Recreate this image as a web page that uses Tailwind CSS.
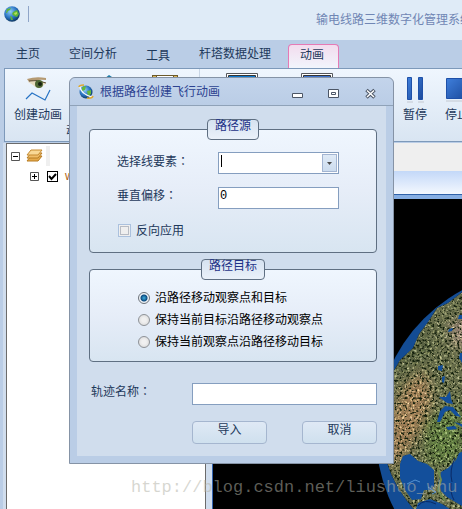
<!DOCTYPE html>
<html lang="zh-CN">
    <head>
        <meta charset="UTF-8">
        <meta name="viewport" content="width=device-width, initial-scale=1.0">
        <title>输电线路三维数字化管理系统</title>
        <script src="https://cdn.jsdelivr.net/npm/@tailwindcss/browser@4"></script>
    </head>
    <body class="relative flex h-screen flex-col overflow-hidden bg-[#bacde6] font-['Liberation_Sans','Noto_Sans_CJK_SC',sans-serif] text-xs text-[#1e395b]">
        <!-- title bar -->
        <header class="flex h-10 shrink-0 items-start overflow-hidden bg-[#dfebf7] pl-1 pt-1.5">
            <svg class="size-4 shrink-0" viewBox="0 0 16 16">
                <defs>
                    <radialGradient id="ball" cx="40%" cy="35%" r="65%">
                        <stop offset="0" stop-color="#8fcdf4"/>
                        <stop offset="0.6" stop-color="#2a74c4"/>
                        <stop offset="1" stop-color="#0f3a64"/>
                    </radialGradient>
                </defs>
                <circle cx="8" cy="8" r="7.8" fill="url(#ball)"/>
                <path d="M3 3L7 2L6 4L4 5L3 7L2 7ZM9 6L13 4L15 8L13 11L10 10L8 8ZM6 10L8 11L9 14L7 14Z" fill="#5db53a"/>
                <path d="M10 7L13 6L13 8L11 9Z" fill="#b6e05a"/>
            </svg>
            <span class="ml-2 h-4 w-px shrink-0 bg-[#8fa5c8]"></span>
            <h1 class="ml-[287px] mt-1 whitespace-nowrap leading-5 text-[#7086b4]">输电线路三维数字化管理系统</h1>
        </header>

        <!-- ribbon tabs -->
        <nav class="flex h-7 shrink-0 items-end gap-[29px] overflow-visible whitespace-nowrap pl-4">
            <button class="h-6 pb-1">主页</button>
            <button class="h-6 pb-1">空间分析</button>
            <button class="h-6">工具</button>
            <button class="h-6 pb-1">杆塔数据处理</button>
            <button class="relative z-10 -ml-3 h-6 rounded-t-sm border border-b-0 border-[#e57ab5] bg-linear-to-b from-[#f2dcee] to-[#f1f5fc] pb-1 pl-[11px] pr-[14px]">动画</button>
        </nav>

        <!-- ribbon -->
        <section class="ml-1 h-[74px] shrink-0 overflow-hidden border border-r-0 border-[#7d99ba] bg-linear-to-b from-[#eff6fe] to-[#d9e5f2]">
            <div class="flex h-14 whitespace-nowrap">
                <button class="flex w-[66px] shrink-0 flex-col items-center pt-2">
                    <svg class="h-7 w-8 shrink-0" viewBox="0 0 32 28">
                        <path d="M5 2Q14-1 24 1L24 3Q14 2 7 5Z" fill="#b59a72"/>
                        <path d="M6 5Q15 2 24 6L20 10Q15 13 11 8Z" fill="#e9dcc0"/>
                        <path d="M7 4Q15 2 24 6" fill="none" stroke="#5d4a32"/>
                        <circle cx="17" cy="7" r="4" fill="#4f6634"/>
                        <circle cx="18" cy="7" r="2" fill="#162010"/>
                        <path d="M4 22L10 16L23 23L28 13" fill="none" stroke="#2673c4" stroke-width="1.2"/>
                    </svg>
                    <span class="leading-5">创建动画</span>
                </button>
                <button class="flex w-[74px] shrink-0 justify-center pt-1.5">
                    <svg class="size-6" viewBox="0 0 24 24"><path d="M8 4L13 0L16 2L18 5Z" fill="#1e7aa6"/></svg>
                </button>
                <button class="flex w-10 shrink-0 justify-center pt-1.5">
                    <svg class="h-6 w-[26px]" viewBox="0 0 26 24">
                        <path d="M0 0H26V24H0Z" fill="#6b5a2c"/>
                        <path d="M1 1H4V4H1ZM22 1H25V4H22Z" fill="#e0b95c"/>
                        <path d="M5 1H21V20H5Z" fill="#fff"/>
                    </svg>
                </button>
                <span class="ml-[14px] h-full w-px shrink-0 bg-[#c9d6e6]"></span>
                <button class="flex w-[84px] shrink-0 justify-center pt-1">
                    <svg class="h-6 w-8" viewBox="0 0 32 24">
                        <path d="M.5.5H31.5V23.5H.5Z" fill="#fff" stroke="#55575c"/>
                        <path d="M2.500 2.500H29.500V20H2.500Z" fill="#0b78d0" stroke="#333"/>
                    </svg>
                </button>
                <button class="flex w-[66px] shrink-0 justify-center pt-1">
                    <svg class="h-6 w-8" viewBox="0 0 32 24">
                        <path d="M.5.5H31.5V23.5H.5Z" fill="#fff" stroke="#55575c"/>
                        <path d="M2.500 2.500H29.500V20H2.500Z" fill="#3e74d0" stroke="#333"/>
                    </svg>
                </button>
                <button class="flex w-[38px] shrink-0 justify-center pt-2">
                    <svg class="size-4" viewBox="0 0 16 16"><path d="M8 0L12 4H8Z" fill="#3166c4"/></svg>
                </button>
                <button class="flex w-[54px] shrink-0 flex-col items-center pt-2">
                    <svg class="h-7 w-5 shrink-0" viewBox="0 0 20 28">
                        <defs>
                            <linearGradient id="bar" x1="0" y1="0" x2="1" y2="1">
                                <stop offset="0" stop-color="#3f7fdc"/>
                                <stop offset="1" stop-color="#1b4a9c"/>
                            </linearGradient>
                        </defs>
                        <path d="M2 25H8M13 25H19" stroke="#c3c8d0"/>
                        <path d="M2.500.500H6.500V22.500H2.500ZM13.500.500H17.500V22.500H13.500Z" fill="url(#bar)" stroke="#1e50a8"/>
                    </svg>
                    <span class="leading-5">暂停</span>
                </button>
                <button class="flex w-[30px] shrink-0 flex-col items-center pt-2">
                    <svg class="h-7 w-6 shrink-0" viewBox="0 0 24 28">
                        <path d="M1 24H23" stroke="#c3c8d0"/>
                        <path d="M1.500 1.500H22.500V21.500H1.500Z" fill="url(#bar)" stroke="#1e50a8"/>
                    </svg>
                    <span class="leading-5">停止</span>
                </button>
            </div>
            <p class="pl-[61px] leading-3">动画</p>
        </section>

        <!-- workspace -->
        <main class="mt-px flex min-h-0 flex-1">
            <aside class="ml-[3px] w-[209px] shrink-0 bg-[#d0dded] pl-[3px] pr-1.5">
                <ul class="-mb-px h-full overflow-hidden border border-b-0 border-[#6b6b6b] bg-white pl-1">
                    <li class="flex h-6 items-center">
                        <svg class="size-[9px]" viewBox="0 0 9 9"><path d="M.5.5H8.500V8.500H.5Z" fill="#fff" stroke="#555"/><path d="M2 4.500H7" stroke="#000"/></svg>
                        <svg class="ml-1.5 h-4 w-[17px]" viewBox="0 0 17 16">
                            <path d="M1 13L5 8H16L12 13Z" fill="#e5a94a" stroke="#b87c22"/>
                            <path d="M1 10L5 5H16L12 10Z" fill="#f0bd68" stroke="#b87c22"/>
                            <path d="M1 7L5 2H16L12 7Z" fill="#f9d895" stroke="#c58a30"/>
                        </svg>
                        <span class="ml-[3px] h-5 w-1 bg-[#efefef]"></span>
                    </li>
                    <li class="flex h-4 items-center pl-[19px]">
                        <svg class="size-[9px]" viewBox="0 0 9 9"><path d="M.5.5H8.500V8.500H.5Z" fill="#fff" stroke="#555"/><path d="M2 4.500H7M4.500 2V7" stroke="#000"/></svg>
                        <input type="checkbox" checked aria-label="w" class="peer ml-2 size-[11px] appearance-none border border-black bg-white">
                        <svg class="pointer-events-none -ml-[10px] size-[9px]" viewBox="0 0 9 9"><path d="M1 4L3.500 7L8 2" fill="none" stroke="#000" stroke-width="2"/></svg>
                        <span class="ml-2 leading-4 text-[#b06010]">w</span>
                    </li>
                </ul>
            </aside>
            <section class="flex min-w-0 flex-1 flex-col">
                <div class="h-7 shrink-0 bg-[#efefef]"></div>
                <div class="h-6 shrink-0 border-b border-[#2f61a8] bg-linear-to-b from-[#c3d8f8] to-[#f4f8fe]"></div>
                <div class="h-1 shrink-0 bg-[#86aee3]"></div>
                <div class="min-h-0 flex-1 overflow-hidden border-l border-[#3464b0] bg-black">
                    <svg class="h-[310px] w-[420px]" viewBox="213 199 420 310">
                        <defs>
                            <clipPath id="disc"><circle cx="539" cy="434" r="163"/></clipPath>
                            <filter id="terrain" x="0" y="0" width="100%" height="100%" color-interpolation-filters="sRGB">
                                <feTurbulence type="fractalNoise" baseFrequency="0.4" numOctaves="3" seed="4" result="n"/>
                                <feColorMatrix in="n" type="matrix" values="1.3 0 0 0 -0.65  1.2 0.1 0 0 -0.65  1.1 0 0.1 0 -0.62  0 0 0 0 1" result="g"/>
                                <feComposite in="SourceGraphic" in2="g" operator="arithmetic" k2="1" k3="0.9" result="lit"/>
                                <feColorMatrix in="n" type="matrix" values="0 0 0 0 0.08  0 0 0 0 0.13  0 0 0 0 0.05  0 -5 0 0 2.4" result="dark"/>
                                <feMerge result="all"><feMergeNode in="lit"/><feMergeNode in="dark"/></feMerge>
                                <feComposite in="all" in2="SourceGraphic" operator="in"/>
                            </filter>
                            <filter id="soft"><feGaussianBlur stdDeviation="6"/></filter>
                            <clipPath id="coast"><path d="M470 286L448 303L437 308L428 322L419 334L413 348L400 360L392 374L386 400L386 460L391 474L398 488L407 501L416 512H470Z"/></clipPath>
                        </defs>
                        <g clip-path="url(#disc)">
                            <path d="M370 260H640V520H370Z" fill="#134c94"/>
                            <g filter="url(#terrain)">
                                <g clip-path="url(#coast)">
                                    <path d="M370 260H640V520H370Z" fill="#666c4a"/>
                                    <g filter="url(#soft)">
                                        <path d="M405 385L425 370L432 400L420 430L405 455L388 470L388 420Z" fill="#9c7c55"/>
                                        <path d="M425 420L462 405V460L430 465Z" fill="#5f7a40"/>
                                        <path d="M448 325L470 315V350L455 345Z" fill="#978274"/>
                                        <path d="M395 372L412 350L430 330L425 355Z" fill="#4d583a"/>
                                    </g>
                                </g>
                            </g>
                            <g fill="#134f9b">
                                <path d="M403 456L410 454L418 461L427 464L434 470L434 486L431 490L424 490L421 499L412 500L405 490L400 478L400 464Z"/>
                                <path d="M470 448L459 453L456 460L448 468L441 472L439 482L441 491L447 497L462 506L470 509Z"/>
                                <path d="M418 503L430 499L442 504L450 509H416Z"/>
                                <path d="M439 397L446 397L450 391L451 399L453 404L447 403Z"/>
                                <path d="M437 422L440 411L445 406L453 407L461 417L456 416L450 410L445 412L440 422ZM446 427L455 426L457 429L448 430ZM454 422L462 424V427Z"/>
                                <path d="M438 366L443 365L442 371L438 370ZM449 329L453 328L452 331L448 332ZM459 315H462V319H458ZM460 353H462V363L459 358ZM442 377L445 376L444 383L442 382Z"/>
                            </g>
                            <path d="M407 484L415 480L420 482M428 487L436 492L432 494" fill="none" stroke="#5593d3"/>
                            <path d="M418 506Q424 498 436 504M451 483Q450 493 454 500M455 458Q449 470 452 482" fill="none" stroke="#0a2a66"/>
                            <path d="M438 470L441 480L438 490L445 501" fill="none" stroke="#6f8a4c" stroke-width="2"/>
                        </g>
                    </svg>
                </div>
            </section>
        </main>

        <p class="absolute left-[131px] top-[478px] whitespace-nowrap font-['Liberation_Mono',monospace] text-[17px] leading-5 text-[#b3b3a8]/53">http://blog.csdn.net/liushuo_whu</p>

        <!-- dialog window -->
        <div role="dialog" aria-labelledby="dlgTitle" class="absolute left-[69px] top-[77px] z-20 w-[325px] rounded-t-md border border-[#8593a6] bg-[#bacde6]">
            <div class="flex h-7 items-center rounded-t-md border-b border-[#8fa2b8] bg-linear-to-b from-[#c3d4eb] to-[#bacde6] pl-2 pr-[17px]">
                <svg class="size-4" viewBox="0 0 16 16">
                    <circle cx="8" cy="8" r="6.500" fill="url(#ball)"/>
                    <path d="M4 3L8 2L7 6L4 7ZM9 7L13 6L13 10L10 12Z" fill="#63b83c"/>
                    <path d="M2 3Q3 10 14 13" fill="none" stroke="#f8fafc" stroke-width="1.500"/>
                    <path d="M1 3Q1 1 6 1M15 12Q14 15 9 14" fill="none" stroke="#e0a92e" stroke-width="1.500"/>
                </svg>
                <h2 id="dlgTitle" class="ml-1.5 flex-1 text-[#2c4290]">根据路径创建飞行动画</h2>
                <button aria-label="最小化" class="mt-1">
                    <svg class="h-3 w-[11px]" viewBox="0 0 11 12"><path d="M.5 5.500H10.500V9.500H.5Z" fill="#fff" stroke="#4c5666"/></svg>
                </button>
                <button aria-label="最大化" class="ml-[25px] mt-1">
                    <svg class="h-3 w-[11px]" viewBox="0 0 11 12"><path d="M.5 1.500H10.500V9.500H.5Z" fill="#fff" stroke="#4c5666"/><path d="M3.500 4.500H7.500V6.500H3.500Z" fill="none" stroke="#4c5666"/></svg>
                </button>
                <button aria-label="关闭" class="ml-[26px] mt-1">
                    <svg class="h-3 w-[11px]" viewBox="0 0 11 12"><path d="M1.500 2L9.500 9.500M9.500 2L1.500 9.500" stroke="#4c5666" stroke-width="3.500"/><path d="M2 2.500L9 9M9 2.500L2 9" stroke="#fff" stroke-width="1.500"/></svg>
                </button>
            </div>

            <form class="mx-[7px] mb-[7px] bg-[#d0dded] pb-3 pl-3 pr-[9px] pt-[13px]">
                <fieldset class="rounded border border-[#5f6f82] bg-linear-to-b from-[#eff6fe] via-[#e6edf8] to-[#d8e5f1] pb-[15px]">
                    <legend class="mx-auto h-[21px] rounded-sm border border-[#5f6f82] bg-linear-to-b from-[#d6e2f0] to-[#eaf1fa] px-[7px] leading-3 text-[#1e3287]">路径源</legend>
                    <div class="mt-3 flex h-[22px] items-center pl-[27px]">
                        <label for="lineLayer" class="w-[101px] pb-1">选择线要素<span lang="zh-TW" class="font-['Noto_Sans_CJK_TC']">：</span></label>
                        <div class="relative h-[22px] w-[121px]">
                            <select id="lineLayer" class="block h-full w-full appearance-none border border-[#859ebf] bg-white px-1 text-black"><option></option></select>
                            <span class="absolute left-[3px] top-[3px] h-3 w-px bg-black"></span>
                            <span class="pointer-events-none absolute right-[2px] top-[2px] flex h-[18px] w-[15px] items-center justify-center border border-[#a3b5d2] bg-linear-to-b from-[#dfeaf6] to-[#ccdcee]">
                                <svg class="h-[3px] w-[5px]" viewBox="0 0 5 3"><path d="M0 0H5L2.500 3Z" fill="#4a4a4a"/></svg>
                            </span>
                        </div>
                    </div>
                    <div class="mt-[13px] flex h-[22px] items-center pl-[27px]">
                        <label for="offset" class="w-[101px] pb-1.5">垂直偏移<span lang="zh-TW" class="font-['Noto_Sans_CJK_TC']">：</span></label>
                        <input id="offset" value="0" class="h-[22px] w-[121px] border border-[#859ebf] bg-white px-px pb-1 font-['Liberation_Mono',monospace] text-black">
                    </div>
                    <div class="mt-[15px] flex h-[13px] items-center pl-7">
                        <input id="reverse" type="checkbox" class="size-[13px] appearance-none border border-[#abc1de] bg-[#efefef] outline -outline-offset-3 outline-[#b8bcc4] checked:bg-[#4a6ea0]">
                        <label for="reverse" class="ml-[5px]">反向应用</label>
                    </div>
                </fieldset>

                <fieldset class="mt-1.5 rounded border border-[#5f6f82] bg-linear-to-b from-[#eff6fe] via-[#e6edf8] to-[#d8e5f1] pb-2 text-black">
                    <legend class="mx-auto h-[21px] rounded-sm border border-[#5f6f82] bg-linear-to-b from-[#d6e2f0] to-[#eaf1fa] px-[7px] leading-3 text-[#1e3287]">路径目标</legend>
                    <div class="mt-[7px] flex h-[22px] items-center pl-12">
                        <input id="moveBoth" type="radio" name="target" checked class="size-3 appearance-none rounded-full border border-[#8e9297] bg-[radial-gradient(circle,#f0f0f0_30%,#d4d4d4)] checked:border-[#6d737b] checked:bg-[radial-gradient(circle_at_50%_50%,#3fb0e0_0,#0b4a80_3px,#eef2f6_4px)]">
                        <label for="moveBoth" class="ml-[5px]">沿路径移动观察点和目标</label>
                    </div>
                    <div class="flex h-[22px] items-center pl-12">
                        <input id="moveObserver" type="radio" name="target" class="size-3 appearance-none rounded-full border border-[#8e9297] bg-[radial-gradient(circle,#f0f0f0_30%,#d4d4d4)] checked:border-[#6d737b] checked:bg-[radial-gradient(circle_at_50%_50%,#3fb0e0_0,#0b4a80_3px,#eef2f6_4px)]">
                        <label for="moveObserver" class="ml-[5px]">保持当前目标沿路径移动观察点</label>
                    </div>
                    <div class="flex h-[22px] items-center pl-12">
                        <input id="moveTarget" type="radio" name="target" class="size-3 appearance-none rounded-full border border-[#8e9297] bg-[radial-gradient(circle,#f0f0f0_30%,#d4d4d4)] checked:border-[#6d737b] checked:bg-[radial-gradient(circle_at_50%_50%,#3fb0e0_0,#0b4a80_3px,#eef2f6_4px)]">
                        <label for="moveTarget" class="ml-[5px]">保持当前观察点沿路径移动目标</label>
                    </div>
                </fieldset>

                <div class="mt-[21px] flex h-[22px] items-center pl-0.5">
                    <label for="trackName" class="w-[101px] pb-1.5">轨迹名称<span lang="zh-TW" class="font-['Noto_Sans_CJK_TC']">：</span></label>
                    <input id="trackName" class="h-[22px] min-w-0 flex-1 border border-[#859ebf] bg-white px-1 text-black">
                </div>
                <div class="mt-4 flex justify-end gap-[35px]">
                    <button type="button" class="h-[23px] w-[75px] rounded-sm border border-[#a5b6cf] bg-linear-to-b from-[#dfe9f5] to-[#cfe0ee] pb-1.5">导入</button>
                    <button type="button" class="h-[23px] w-[75px] rounded-sm border border-[#a5b6cf] bg-linear-to-b from-[#dfe9f5] to-[#cfe0ee] pb-1.5">取消</button>
                </div>
            </form>
        </div>
    </body>
</html>
